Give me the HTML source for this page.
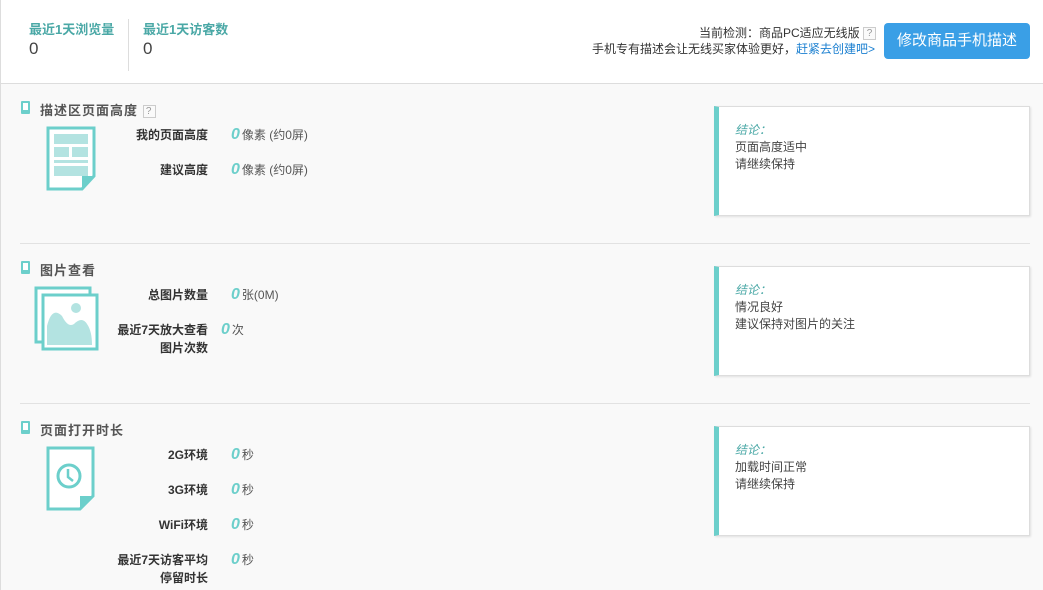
<!DOCTYPE html>
<html><head><meta charset="utf-8"><style>
*{margin:0;padding:0;box-sizing:border-box}
body{width:1043px;height:590px;overflow:hidden;background:#f9f9f9;font-family:"Liberation Sans","Noto Sans CJK SC",sans-serif;font-size:12px;color:#333;position:relative}
.a{position:absolute;white-space:nowrap}
.hdr{position:absolute;left:0;top:0;width:1043px;height:84px;background:#fff;border-bottom:1px solid #ddd;border-left:1px solid #ddd}
.lbl{color:#4aa8a6;font-weight:bold;font-size:13px}
.num{font-size:17px;color:#444}
.btn{position:absolute;left:884px;top:23px;width:146px;height:36px;background:#3a9fe6;border-radius:4px;color:#fff;font-size:15px;text-align:center;line-height:36px}
.q{display:inline-block;width:13px;height:13px;border:1px solid #ccc;color:#999;font-size:10px;line-height:11px;text-align:center;vertical-align:middle;background:#fafafa}
.ttl{font-weight:bold;font-size:13px;color:#555;letter-spacing:1px}
.phone{position:absolute;width:9px;height:13px;background:#6ccfcb;border-radius:1px}
.phone:after{content:"";position:absolute;left:2px;top:2px;width:5px;height:7px;background:#fff}
.k{font-weight:bold;color:#333;text-align:right;width:120px;line-height:18px}
.v{color:#555}
.v i{color:#6ccfcb;font-size:16px;font-weight:bold;margin-right:2px}
.box{position:absolute;left:714px;width:316px;height:110px;background:#fff;border:1px solid #ddd;border-left:5px solid #6ccfcb;box-shadow:1px 1px 2px rgba(0,0,0,.1);padding:15px 0 0 16px;line-height:17px;color:#444}
.box em{color:#4aa8a6}
.sep{position:absolute;left:20px;width:1010px;height:1px;background:#e2e2e2}
.edge{position:absolute;left:0;top:84px;width:1px;height:506px;background:#ddd}
</style></head><body>
<div class="hdr"></div>
<div class="edge"></div>
<div class="a lbl" style="left:29px;top:19px">最近1天浏览量</div>
<div class="a num" style="left:29px;top:39px">0</div>
<div style="position:absolute;left:128px;top:19px;width:1px;height:52px;background:#ddd"></div>
<div class="a lbl" style="left:143px;top:19px">最近1天访客数</div>
<div class="a num" style="left:143px;top:39px">0</div>
<div class="a" style="right:167px;top:24px;color:#333">当前检测：商品PC适应无线版 <span class="q">?</span></div>
<div class="a" style="right:168px;top:40px;color:#333">手机专有描述会让无线买家体验更好，<span style="color:#1a7fd0">赶紧去创建吧&gt;</span></div>
<div class="btn">修改商品手机描述</div>

<!-- section 1 -->
<div class="phone" style="left:21px;top:101px"></div>
<div class="a ttl" style="left:40px;top:100px">描述区页面高度 <span class="q" style="font-weight:normal">?</span></div>
<svg class="a" style="left:46px;top:126px" width="50" height="65"><path d="M2 2H48V50L36 63H2Z" fill="#fff" stroke="#6ccfcb" stroke-width="3"/><path d="M36 63V50H48" fill="#6ccfcb"/><rect x="8" y="8" width="34" height="10" fill="#b3e3e1"/><rect x="8" y="21" width="15" height="10" fill="#b3e3e1"/><rect x="26" y="21" width="16" height="10" fill="#b3e3e1"/><rect x="8" y="34" width="34" height="3" fill="#b3e3e1"/><rect x="8" y="40" width="34" height="10" fill="#b3e3e1"/></svg>
<div class="a k" style="left:88px;top:126px">我的页面高度</div>
<div class="a v" style="left:231px;top:126px"><i>0</i>像素 (约0屏)</div>
<div class="a k" style="left:88px;top:161px">建议高度</div>
<div class="a v" style="left:231px;top:161px"><i>0</i>像素 (约0屏)</div>
<div class="box" style="top:106px"><em>结论：</em><br>页面高度适中<br>请继续保持</div>
<div class="sep" style="top:243px"></div>

<!-- section 2 -->
<div class="phone" style="left:21px;top:261px"></div>
<div class="a ttl" style="left:40px;top:260px">图片查看</div>
<svg class="a" style="left:34px;top:286px" width="66" height="66"><rect x="2" y="2" width="54" height="54" fill="#fff" stroke="#6ccfcb" stroke-width="3"/><rect x="9" y="9" width="54" height="54" fill="#fff" stroke="#6ccfcb" stroke-width="3"/><circle cx="42" cy="22" r="5" fill="#b3e3e1"/><path d="M13 59V40Q18 20 28 30Q34 42 40 38Q48 30 53 38Q58 45 58 59Z" fill="#b3e3e1"/></svg>
<div class="a k" style="left:88px;top:286px">总图片数量</div>
<div class="a v" style="left:231px;top:286px"><i>0</i>张(0M)</div>
<div class="a k" style="left:88px;top:321px">最近7天放大查看<br>图片次数</div>
<div class="a v" style="left:221px;top:321px"><i>0</i>次</div>
<div class="box" style="top:266px"><em>结论：</em><br>情况良好<br>建议保持对图片的关注</div>
<div class="sep" style="top:403px"></div>

<!-- section 3 -->
<div class="phone" style="left:21px;top:421px"></div>
<div class="a ttl" style="left:40px;top:420px">页面打开时长</div>
<svg class="a" style="left:46px;top:446px" width="50" height="66"><path d="M2 2H47V50L34 63H2Z" fill="#fff" stroke="#6ccfcb" stroke-width="3"/><path d="M34 63V50H47" fill="#6ccfcb"/><circle cx="23" cy="30" r="11" fill="none" stroke="#6ccfcb" stroke-width="3"/><path d="M22 23V31L27 35" fill="none" stroke="#6ccfcb" stroke-width="2.5"/></svg>
<div class="a k" style="left:88px;top:446px">2G环境</div>
<div class="a v" style="left:231px;top:446px"><i>0</i>秒</div>
<div class="a k" style="left:88px;top:481px">3G环境</div>
<div class="a v" style="left:231px;top:481px"><i>0</i>秒</div>
<div class="a k" style="left:88px;top:516px">WiFi环境</div>
<div class="a v" style="left:231px;top:516px"><i>0</i>秒</div>
<div class="a k" style="left:88px;top:551px">最近7天访客平均<br>停留时长</div>
<div class="a v" style="left:231px;top:551px"><i>0</i>秒</div>
<div class="box" style="top:426px"><em>结论：</em><br>加载时间正常<br>请继续保持</div>
</body></html>
